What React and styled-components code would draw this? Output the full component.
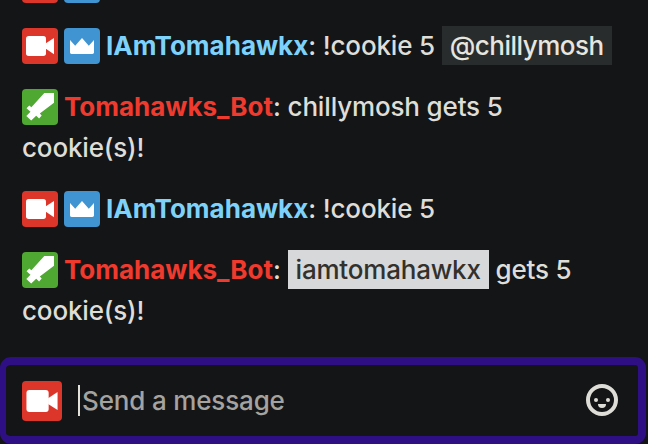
import React from "react";
import styled, { createGlobalStyle } from "styled-components";

const GlobalStyle = createGlobalStyle`
  *, *::before, *::after { box-sizing: border-box; }
  body {
    margin: 0;
    background: #141517;
    overflow: hidden;
  }
`;

const Chat = styled.main`
  display: flex;
  flex-direction: column;
  width: 648px;
  height: 444px;
  overflow: hidden;
  background: #141517;
  color: #deddd7;
  font: 450 26px/41px Inter, sans-serif;
  letter-spacing: -0.16px;
`;

const Messages = styled.section`
  display: flex;
  flex: 1;
  flex-direction: column;
  justify-content: flex-end;
  gap: 20px;
  min-height: 0;
  padding: 0 22px 26px;
`;

const Message = styled.div`
  flex: none;
  min-height: 41px;
`;

const BadgeBox = styled.svg`
  display: inline-block;
  flex: none;
  width: ${(p) => p.$size}px;
  height: ${(p) => p.$size}px;
  margin-right: ${(p) => p.$gap}px;
  border-radius: 4px;
  background: ${(p) => p.$color};
  vertical-align: -9px;
  fill: #fff;
`;

const Author = styled.span`
  color: ${(p) => p.$color};
  font-weight: 750;
  letter-spacing: 0;
`;

const Mention = styled.span`
  display: inline-block;
  height: 39px;
  padding: 0 8px;
  line-height: 39px;
  letter-spacing: ${(p) => (p.$self ? "-0.2px" : "-0.5px")};
  vertical-align: top;
  margin-top: 1px;
  color: ${(p) => (p.$self ? "#32312d" : "#e6e5df")};
  background: ${(p) => (p.$self ? "#d7d8da" : "#292c2d")};
`;

const InputFrame = styled.section`
  display: flex;
  flex: none;
  align-items: center;
  width: 646px;
  height: 87px;
  padding: 0 20px 0 16px;
  border: solid #2f0f84;
  border-width: 8px 8px 8px 6px;
  border-radius: 11px;
`;

const Caret = styled.span`
  width: 2px;
  height: 31px;
  margin-right: 2px;
  background: #e2e1da;
`;

const Placeholder = styled.span`
  flex: 1;
  color: #a4a3a0;
`;

const Smiley = styled.svg`
  width: 32px;
  height: 32px;
  margin-bottom: 1px;
`;

const badges = {
  broadcaster: {
    color: "#dc362b",
    art: (
      <>
        <rect x="4" y="8" width="20" height="20" rx="2.7" />
        <path d="M23.5 15.5 32 9.9v16.3l-8.5-5.6z" />
      </>
    ),
  },
  prime: {
    color: "#4094d1",
    art: <path d="M6 12l5.2 5.8L18 10l6.8 7.8L30 12v12.3c0 1-.7 1.7-1.7 1.7H7.7C6.7 26 6 25.3 6 24.3z" />,
  },
  moderator: {
    color: "#4ea832",
    art: <path d="M22.3 4H32v9.7L17.8 24.6l1.9 2-2.6 2.8-2.9-2.6-5 4.7-4.9-4.6 4.2-4.1-4-3.6 2.8-2.8 2.1 1.8z" />,
  },
};

function Badge({ kind, size = 36, gap = 6 }) {
  const badge = badges[kind];
  return (
    <BadgeBox $size={size} $gap={gap} $color={badge.color} viewBox="0 0 36 36" aria-hidden="true">
      {badge.art}
    </BadgeBox>
  );
}

function OwnerBadges() {
  return (
    <>
      <Badge kind="broadcaster" />
      <Badge kind="prime" />
    </>
  );
}

export default function App() {
  return (
    <>
      <GlobalStyle />
      <Chat>
        <Messages>
          <Message><OwnerBadges /></Message>
          <Message>
            <OwnerBadges />
            <Author $color="#7dd2fb">IAmTomahawkx</Author>: !cookie 5 <Mention>@chillymosh</Mention>
          </Message>
          <Message>
            <Badge kind="moderator" />
            <Author $color="#ef3a2d">Tomahawks_Bot</Author>: chillymosh gets 5<br />cookie(s)!
          </Message>
          <Message>
            <OwnerBadges />
            <Author $color="#7dd2fb">IAmTomahawkx</Author>: !cookie 5
          </Message>
          <Message>
            <Badge kind="moderator" />
            <Author $color="#ef3a2d">Tomahawks_Bot</Author>: <Mention $self>iamtomahawkx</Mention> gets 5<br />cookie(s)!
          </Message>
        </Messages>
        <InputFrame>
          <Badge kind="broadcaster" size={40} gap={16} />
          <Caret />
          <Placeholder>Send a message</Placeholder>
          <Smiley viewBox="0 0 32 32" aria-hidden="true">
            <circle cx="16" cy="16" r="14" fill="none" stroke="#deddd7" strokeWidth="4" />
            <circle cx="10" cy="16" r="2" fill="#deddd7" />
            <circle cx="22" cy="16" r="2" fill="#deddd7" />
            <path d="M12 20h8a4 4 0 0 1-8 0z" fill="#deddd7" />
          </Smiley>
        </InputFrame>
      </Chat>
    </>
  );
}
